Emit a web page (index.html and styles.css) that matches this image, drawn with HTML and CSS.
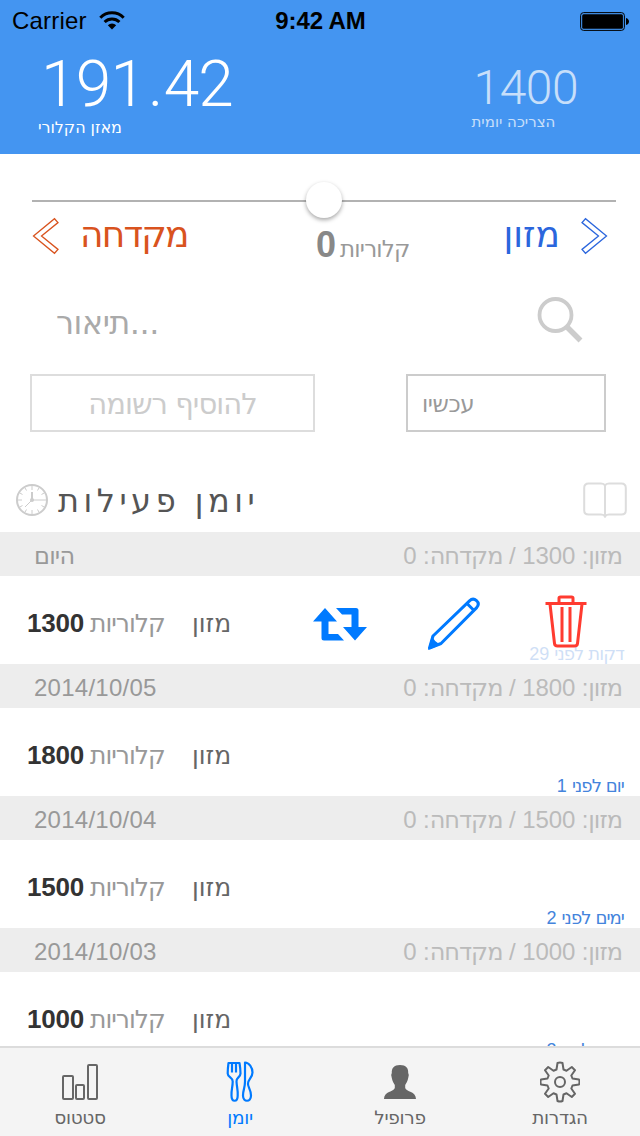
FILE: index.html
```html
<!DOCTYPE html>
<html lang="he">
<head>
<meta charset="utf-8">
<title>יומן פעילות</title>
<link rel="stylesheet" href="styles.css">
</head>
<body>
<div class="app">
  <header class="header">
    <div class="status">
      <div class="carrier"><span class="carrier-name">Carrier</span>
        <svg class="wifi" width="26" height="20" viewBox="0 0 26 20" fill="none" stroke="#000" stroke-width="3"><path d="M1.300 6.700a16.500 16.500 0 0 1 23.400 0M5.600 11a10.500 10.500 0 0 1 14.800 0"/><path d="M8.800 14.200a6 6 0 0 1 8.400 0L13 18.500z" fill="#000" stroke="none"/></svg>
      </div>
      <div class="clock">9:42 AM</div>
      <svg class="battery" width="49" height="19" viewBox="0 0 49 19"><rect x=".6" y=".6" width="43.800" height="17.800" rx="3" fill="none" stroke="#000" stroke-width="1"/><rect x="2.200" y="2.200" width="40.700" height="14.600" rx="1.500"/><path d="M46 6c4 1 4 6 0 7z"/></svg>
    </div>
    <div class="totals">
      <div class="balance"><div class="balance-value">191<span class="point">.</span>42</div><div class="balance-label">מאזן הקלורי</div></div>
      <div class="daily"><div class="daily-value">1400</div><div class="daily-label">הצריכה יומית</div></div>
    </div>
  </header>

  <section class="entry">
    <div class="slider"><div class="thumb"></div></div>
    <div class="modes">
      <div class="mode burn"><svg width="28" height="38" viewBox="0 0 28 38" fill="none" stroke="currentColor" stroke-width="1.300"><path d="M1.500 19 22.500 1.700 26 5.600 9.500 19 26 32.400l-3.500 3.900z"/></svg><span>מקדחה</span></div>
      <div class="amount"><b>0</b><span>קלוריות</span></div>
      <div class="mode food"><span>מזון</span><svg width="28" height="38" viewBox="0 0 28 38" fill="none" stroke="currentColor" stroke-width="1.300"><path d="M26.500 19 5.500 1.700 2 5.600 18.500 19 2 32.400l3.500 3.900z"/></svg></div>
    </div>
    <div class="search"><span class="placeholder">תיאור...</span>
      <svg width="48" height="48" viewBox="0 0 48 48" fill="none" stroke="#ccc"><circle cx="19.500" cy="19" r="16" stroke-width="3.800"/><path d="m31 31 13.500 13.500" stroke-width="5.500"/></svg>
    </div>
    <div class="controls"><div class="add"><span>להוסיף רשומה</span></div><div class="when"><span>עכשיו</span></div></div>
  </section>

  <section class="journal">
    <div class="journal-title">
      <svg class="clock-icon" width="32" height="32" viewBox="0 0 32 32" fill="none" stroke="#ccc"><circle cx="16" cy="16" r="15" stroke-width="2"/><path d="M16 2v4M16 26v4M2 16h4M26 16h4M9 3.900l1.500 2.600M21.500 25.500l1.500 2.600M3.900 9l2.600 1.500M25.500 21.500l2.600 1.500M23 3.900l-1.500 2.600M10.500 25.500 9 28.100M28.100 9l-2.600 1.500M6.500 21.500 3.900 23"/><path d="M16 8v8" stroke-width="2"/><path d="M16 16h10M16 16l-7 7"/><circle cx="16" cy="16" r="2" fill="#ccc" stroke="none"/></svg>
      <h1>יומן פעילות</h1>
      <svg class="book" width="44" height="36" viewBox="0 0 44 36" fill="none" stroke="#ddd" stroke-width="2"><path d="M22 3.500Q21 1.500 18 1.500H5.500Q1.200 1.500 1.200 6v22.500q0 4 4.300 4H18q3 0 4 2 1-2 4-2h12.500q4.300 0 4.300-4V6q0-4.500-4.300-4.500H26q-3 0-4 2zM22 3v31"/></svg>
    </div>
    <div class="list">
      <div class="day"><span class="date today">היום</span><span class="sum" dir="rtl">מזון<i>: 1300 / </i>מקדחה<i>: 0</i></span></div>
      <div class="row">
        <b class="num">1300</b><span class="unit">קלוריות</span><span class="kind">מזון</span>
        <div class="actions">
          <svg class="swap" width="54" height="34" viewBox="0 0 54 34" fill="#007aff"><path d="M0 13.500 12 0l12 13.500h-8.500V26H25l6 6.500H11q-2.500 0-2.500-2.500V13.500zM23 0h20q2.500 0 2.500 2.500V19H54L42 32.500 30 19h8.500V6.500H29z"/></svg>
          <svg class="pencil" width="54" height="54" viewBox="0 0 54 54" fill="none" stroke="#007aff" stroke-width="3"><path d="M6 39 42.500 3.800q3.500-3.300 7-.2t.2 7L14 46.500 2.500 51zM40 6.500l7 7" stroke-linejoin="round"/><path d="M5 38.500q1.500 6 9 9L1 53z" fill="#007aff" stroke="none"/></svg>
          <svg class="trash" width="42" height="54" viewBox="0 0 42 54" fill="none" stroke="#ff3b30" stroke-width="3"><path d="M.5 8.500h41M14 8V3.300q0-1.300 1.500-1.300h11q1.500 0 1.500 1.300V8M5 9l4.500 39.500q.3 2.500 3 2.500h17q2.700 0 3-2.500L37 9M17 12v35M25 12v35"/></svg>
        </div>
        <span class="ago faded" dir="rtl">דקות לפני<i> 29</i></span>
      </div>
      <div class="day"><span class="date">2014/10/05</span><span class="sum" dir="rtl">מזון<i>: 1800 / </i>מקדחה<i>: 0</i></span></div>
      <div class="row"><b class="num">1800</b><span class="unit">קלוריות</span><span class="kind">מזון</span><span class="ago" dir="rtl">יום לפני<i> 1</i></span></div>
      <div class="day"><span class="date">2014/10/04</span><span class="sum" dir="rtl">מזון<i>: 1500 / </i>מקדחה<i>: 0</i></span></div>
      <div class="row"><b class="num">1500</b><span class="unit">קלוריות</span><span class="kind">מזון</span><span class="ago" dir="rtl">ימים לפני<i> 2</i></span></div>
      <div class="day"><span class="date">2014/10/03</span><span class="sum" dir="rtl">מזון<i>: 1000 / </i>מקדחה<i>: 0</i></span></div>
      <div class="row"><b class="num">1000</b><span class="unit">קלוריות</span><span class="kind">מזון</span><span class="ago" dir="rtl">ימים לפני<i> 3</i></span></div>
    </div>
  </section>

  <nav class="tabs">
    <div class="tab"><svg width="40" height="44" viewBox="0 0 40 44" fill="none" stroke="currentColor" stroke-width="2"><rect x="3" y="16" width="10" height="23" rx="1"/><rect x="16" y="25" width="8" height="14" rx="1"/><rect x="28" y="5" width="9" height="34" rx="1"/></svg><span>סטטוס</span></div>
    <div class="tab active"><svg width="40" height="44" viewBox="0 0 40 44" fill="none" stroke="currentColor" stroke-width="2.200" stroke-linejoin="round"><path d="M8.500 3h11q1 6 1 10.500c0 4-4.500 4-4 8 .3 6 1.500 8 1.200 14 0 7-6.200 7-6.200 0-.3-6 1.200-8 1.200-14 .3-4-5-4-5-8q0-5 .8-10.500zM12 3v9.500M16 3v9.500M25 2.500v19c0 7-2 8-2 14 0 7 8 7 8 0 0-6-3.500-9-3-12 0-4 4.500-6 4.500-11S29 2.500 25 2.500z"/></svg><span>יומן</span></div>
    <div class="tab"><svg width="40" height="44" viewBox="0 0 40 44" fill="currentColor"><path d="M20 5c6 0 8.500 3 8.200 8q1.200 1.500 0 5c-.4 3-2 5-3 7v3c1 4 10.800 3 10.800 11H4c0-8 9.800-7 10.800-11v-3c-1-2-2.600-4-3-7q-1.200-3.500 0-5C11.500 8 14 5 20 5z"/></svg><span>פרופיל</span></div>
    <div class="tab"><svg width="40" height="44" viewBox="0 0 40 44" fill="none" stroke="currentColor" stroke-width="2" stroke-linejoin="round"><path d="M17.500 3q2.500-1 5 0l1 6.500 3 1.200L31.800 7l3.200 3.200-3.700 5.300 1.200 3 6.500 1q1 2.500 0 5l-6.500 1-1.200 3 3.700 5.300-3.200 3.200-5.300-3.700-3 1.200-1 6.500q-2.500 1-5 0l-1-6.500-3-1.200L8.200 37 5 33.800l3.700-5.300-1.200-3-6.500-1q-1-2.500 0-5l6.500-1 1.200-3L5 10.200 8.200 7l5.300 3.700 3-1.200z"/><circle cx="20" cy="22" r="5"/></svg><span>הגדרות</span></div>
  </nav>
</div>
</body>
</html>
```
FILE: styles.css
```css
* { box-sizing: border-box; margin: 0; padding: 0; }
body { width: 640px; height: 1136px; overflow: hidden; background: #fff; font-family: "DejaVu Sans", "Liberation Sans", sans-serif; }
svg { display: block; flex: none; }
span, b, h1 { white-space: nowrap; }
i { font-style: normal; }
.status, .date:not(.today), .num, .amount b, i { font-family: "Liberation Sans", sans-serif; }
.app { display: flex; flex-direction: column; height: 1136px; }
.header { height: 154px; background: #4495f1; color: #fff; flex: none; }
.status { display: grid; grid-template-columns: 1fr auto 1fr; align-items: center; height: 40px; padding: 0 11px 0 12px; color: #000; font-size: 24px; line-height: 42px; }
.carrier { display: flex; align-items: center; gap: 12px; }
.carrier-name { letter-spacing: .2px; }
.clock { font-weight: 700; font-size: 24px; letter-spacing: -.1px; }
.battery { justify-self: end; }
.totals { display: flex; justify-content: space-between; padding: 0 62px 0 38px; }
.balance-value { font: 300 64px/64px Roboto, sans-serif; height: 78px; padding: 13px 0 0 3px; letter-spacing: -.8px; }
.point { padding: 0 1px 0 3px; }
.balance-label { font-size: 16px; line-height: 20px; letter-spacing: -.05px; }
.daily { opacity: .7; padding-top: 4px; }
.daily-value { font: 300 48px/48px Roboto, sans-serif; height: 68px; padding: 20px 0 0 2px; letter-spacing: -.5px; }
.daily-label { font-size: 15px; line-height: 20px; }

.entry { height: 320px; flex: none; }
.slider { display: flex; justify-content: center; align-items: center; height: 36px; margin: 28px 24px 0 32px; background: linear-gradient(#b2b2b2, #b2b2b2) 0 18px / 100% 2px no-repeat; }
.thumb { width: 36px; height: 36px; border-radius: 50%; background: #fff; box-shadow: 0 2px 4px rgba(0,0,0,.35); }
.modes { display: grid; grid-template-columns: 284px 1fr auto; height: 60px; padding: 0 32px; }
.mode { display: flex; align-items: flex-start; margin-top: -1px; font-size: 36px; line-height: 36px; }
.burn { color: #d9531e; gap: 20px; letter-spacing: -1.800px; }
.food { color: #2b66dd; gap: 20px; }
.amount { display: flex; align-items: baseline; gap: 4px; color: #999; font-size: 23px; line-height: 54px; letter-spacing: -.8px; }
.amount b { color: #888; font-size: 36px; letter-spacing: 0; }
.search { display: flex; justify-content: space-between; height: 78px; padding: 18px 56px 0; }
.placeholder { color: #aaa; font-size: 32px; line-height: 54px; letter-spacing: -.5px; }
.controls { display: flex; justify-content: space-between; padding: 18px 34px 0 30px; }
.add, .when { height: 58px; border: 2px solid #ddd; line-height: 56px; }
.add { width: 285px; text-align: center; color: #ccc; font-size: 29px; letter-spacing: -.95px; }
.when { width: 200px; border-color: #ccc; padding-left: 14px; color: #999; font-size: 23px; letter-spacing: -.4px; }

.journal { flex: 1; min-height: 0; overflow: hidden; }
.journal-title { display: flex; align-items: center; height: 58px; padding: 2px 13px 8px 16px; }
.journal-title h1 { flex: 1; margin: 2px 0 0 10px; color: #555; font-size: 32px; font-weight: 400; line-height: 50px; letter-spacing: 4.500px; }
.day { display: flex; justify-content: space-between; height: 44px; padding: 0 18px 0 34px; background: #ededed; color: #999; font-size: 24px; line-height: 48px; }
.date { letter-spacing: .25px; }
.today { letter-spacing: -.8px; }
.sum { color: #bbb; letter-spacing: -1px; }
.sum i { letter-spacing: -.1px; }
.row { display: grid; grid-template-columns: 63px 102px 120px 1fr; height: 88px; padding-left: 27px; position: relative; font-size: 25px; line-height: 95px; }
.num { color: #333; font-size: 26px; letter-spacing: -.2px; }
.unit { color: #999; letter-spacing: -1px; }
.kind { color: #666; }
.actions { display: flex; align-items: flex-start; padding: 20px 53px 0 1px; }
.swap { margin-top: 12px; }
.pencil { margin: 1px 0 0 60px; }
.trash { margin: -1px 0 0 auto; }
.ago { position: absolute; right: 16px; bottom: 0; color: #4484dc; font-size: 18px; line-height: 20px; letter-spacing: -.9px; }
.ago i { letter-spacing: 0; }
.faded { opacity: .25; }

.tabs { display: grid; grid-template-columns: repeat(4, 160px); height: 90px; flex: none; background: #f4f4f4; border-top: 2px solid #dcdcdc; color: #666; font-size: 18.500px; line-height: 27px; letter-spacing: -.3px; }
.tab { display: flex; flex-direction: column; align-items: center; padding-top: 12px; }
.active { color: #007aff; }
```
